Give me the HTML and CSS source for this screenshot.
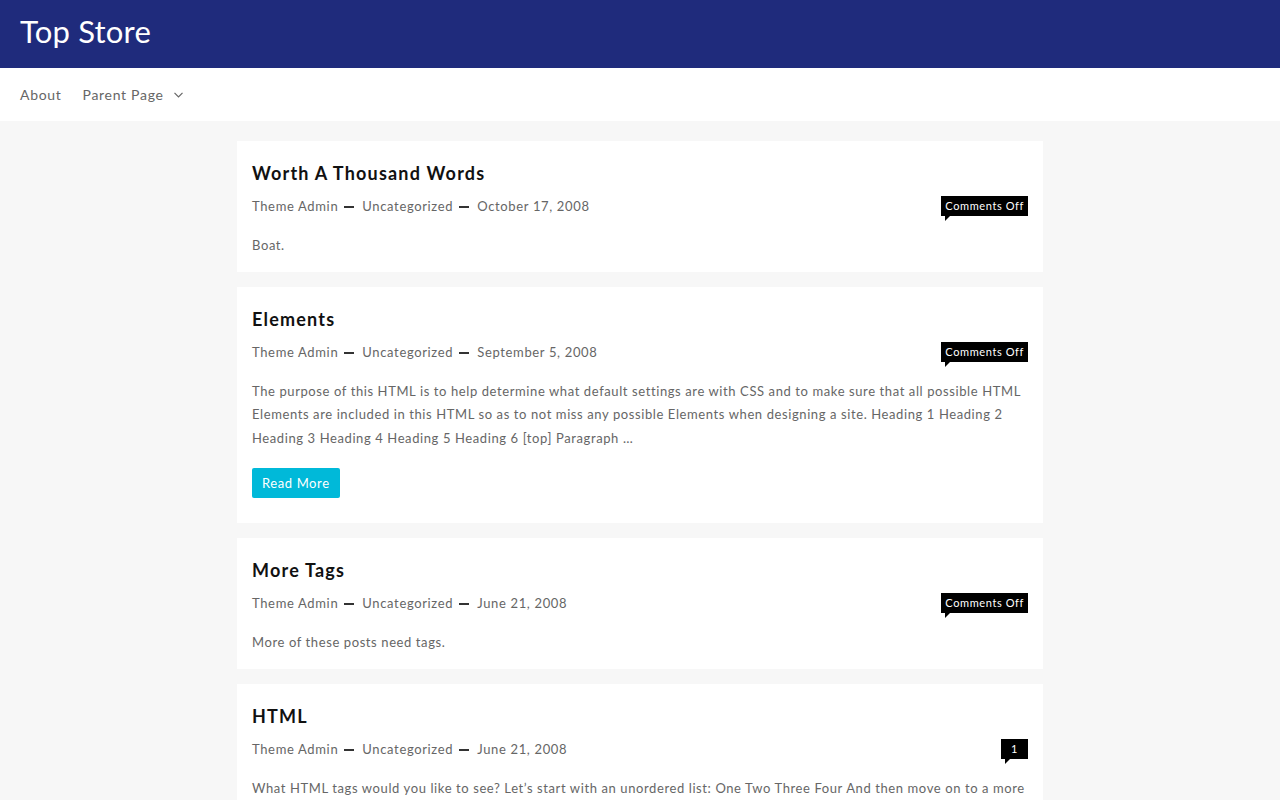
FILE: index.html
```html
<!DOCTYPE html>
<html lang="en">

<head>
    <meta charset="UTF-8">
    <meta name="viewport" content="width=device-width, initial-scale=1.0">
    <title>Top Store</title>
    <link rel="stylesheet" href="styles.css">
</head>

<body>
    <header class="site-header">
        <h1 class="site-title">Top Store</h1>
    </header>

    <nav class="main-nav">
        <a href="#" class="nav-link">About</a>
        <a href="#" class="nav-link">Parent Page
            <svg class="nav-arrow" width="9" height="6" viewBox="0 0 9 6"><path d="M0.5 0.8 L4.5 4.8 L8.5 0.8" fill="none" stroke="#666" stroke-width="1.2"/></svg>
        </a>
    </nav>

    <main class="posts">
        <article class="post">
            <h2 class="post-title">Worth A Thousand Words</h2>
            <div class="post-meta">
                <div class="meta-info">
                    <span>Theme Admin</span><span class="sep"></span><span>Uncategorized</span><span class="sep"></span><span>October 17, 2008</span>
                </div>
                <span class="comments-badge">Comments Off</span>
            </div>
            <p class="post-excerpt">Boat.</p>
        </article>

        <article class="post">
            <h2 class="post-title">Elements</h2>
            <div class="post-meta">
                <div class="meta-info">
                    <span>Theme Admin</span><span class="sep"></span><span>Uncategorized</span><span class="sep"></span><span>September 5, 2008</span>
                </div>
                <span class="comments-badge">Comments Off</span>
            </div>
            <p class="post-excerpt">The purpose of this HTML is to help determine what default settings are with CSS and to make sure that all possible HTML Elements are included in this HTML so as to not miss any possible Elements when designing a site. Heading 1 Heading 2 Heading 3 Heading 4 Heading 5 Heading 6 [top] Paragraph …</p>
            <a href="#" class="read-more">Read More</a>
        </article>

        <article class="post">
            <h2 class="post-title">More Tags</h2>
            <div class="post-meta">
                <div class="meta-info">
                    <span>Theme Admin</span><span class="sep"></span><span>Uncategorized</span><span class="sep"></span><span>June 21, 2008</span>
                </div>
                <span class="comments-badge">Comments Off</span>
            </div>
            <p class="post-excerpt">More of these posts need tags.</p>
        </article>

        <article class="post">
            <h2 class="post-title">HTML</h2>
            <div class="post-meta">
                <div class="meta-info">
                    <span>Theme Admin</span><span class="sep"></span><span>Uncategorized</span><span class="sep"></span><span>June 21, 2008</span>
                </div>
                <span class="comments-badge count">1</span>
            </div>
            <p class="post-excerpt">What HTML tags would you like to see? Let’s start with an unordered list: One Two Three Four And then move on to a more complex list of things and see how it looks when it wraps onto the next line here.</p>
        </article>
    </main>
</body>

</html>
```

FILE: styles.css
```css
body {
    font-family: Lato, 'Liberation Sans', sans-serif;
    background-color: #f7f7f7;
    margin: 0;
    padding: 0;
    color: #666;
}

.site-header {
    background-color: #1f2b7c;
    height: 68px;
    display: flex;
    align-items: center;
    padding: 0 20px 6px;
    box-sizing: border-box;
}

.site-title {
    color: #fff;
    font-size: 31px;
    font-weight: normal;
    margin: 0;
    letter-spacing: 0.2px;
}

.main-nav {
    background-color: #fff;
    height: 53px;
    display: flex;
    align-items: center;
    padding: 0 20px;
    gap: 21px;
}

.nav-link {
    color: #666;
    text-decoration: none;
    font-size: 14px;
    letter-spacing: 0.7px;
    display: flex;
    align-items: center;
}

.nav-arrow {
    margin-left: 10px;
}

.posts {
    width: 806px;
    margin: 20px auto 0;
    display: flex;
    flex-direction: column;
    gap: 15px;
}

.post {
    background-color: #fff;
    padding: 17px 15px 14px;
}

.post-title {
    color: #111;
    font-size: 18px;
    font-weight: bold;
    line-height: 30px;
    letter-spacing: 1.2px;
    margin: 0;
}

.post-meta {
    display: flex;
    justify-content: space-between;
    align-items: center;
    margin-top: 8px;
    height: 20px;
}

.meta-info {
    font-size: 13px;
    letter-spacing: 0.65px;
    display: flex;
    align-items: center;
}

.sep {
    display: inline-block;
    width: 10px;
    height: 2px;
    background-color: #333;
    margin: 2px 8px 0 6px;
}

.comments-badge {
    position: relative;
    background-color: #000;
    color: #fff;
    font-size: 11px;
    letter-spacing: 0.6px;
    line-height: 20px;
    padding: 0 4px;
}

.comments-badge.count {
    width: 27px;
    padding: 0;
    text-align: center;
    box-sizing: border-box;
}

/* little speech tail under the badge */
.comments-badge::after {
    content: '';
    position: absolute;
    left: 4px;
    top: 20px;
    border-top: 5px solid #000;
    border-right: 5px solid transparent;
}

.post-excerpt {
    font-size: 13px;
    line-height: 23.5px;
    letter-spacing: 0.6px;
    margin: 18px 0 0;
}

.read-more {
    display: inline-block;
    margin: 18px 0 11px;
    background-color: #00b9d9;
    color: #fff;
    text-decoration: none;
    font-size: 13px;
    letter-spacing: 0.6px;
    line-height: 30px;
    padding: 0 10px;
    border-radius: 2px;
}
```
